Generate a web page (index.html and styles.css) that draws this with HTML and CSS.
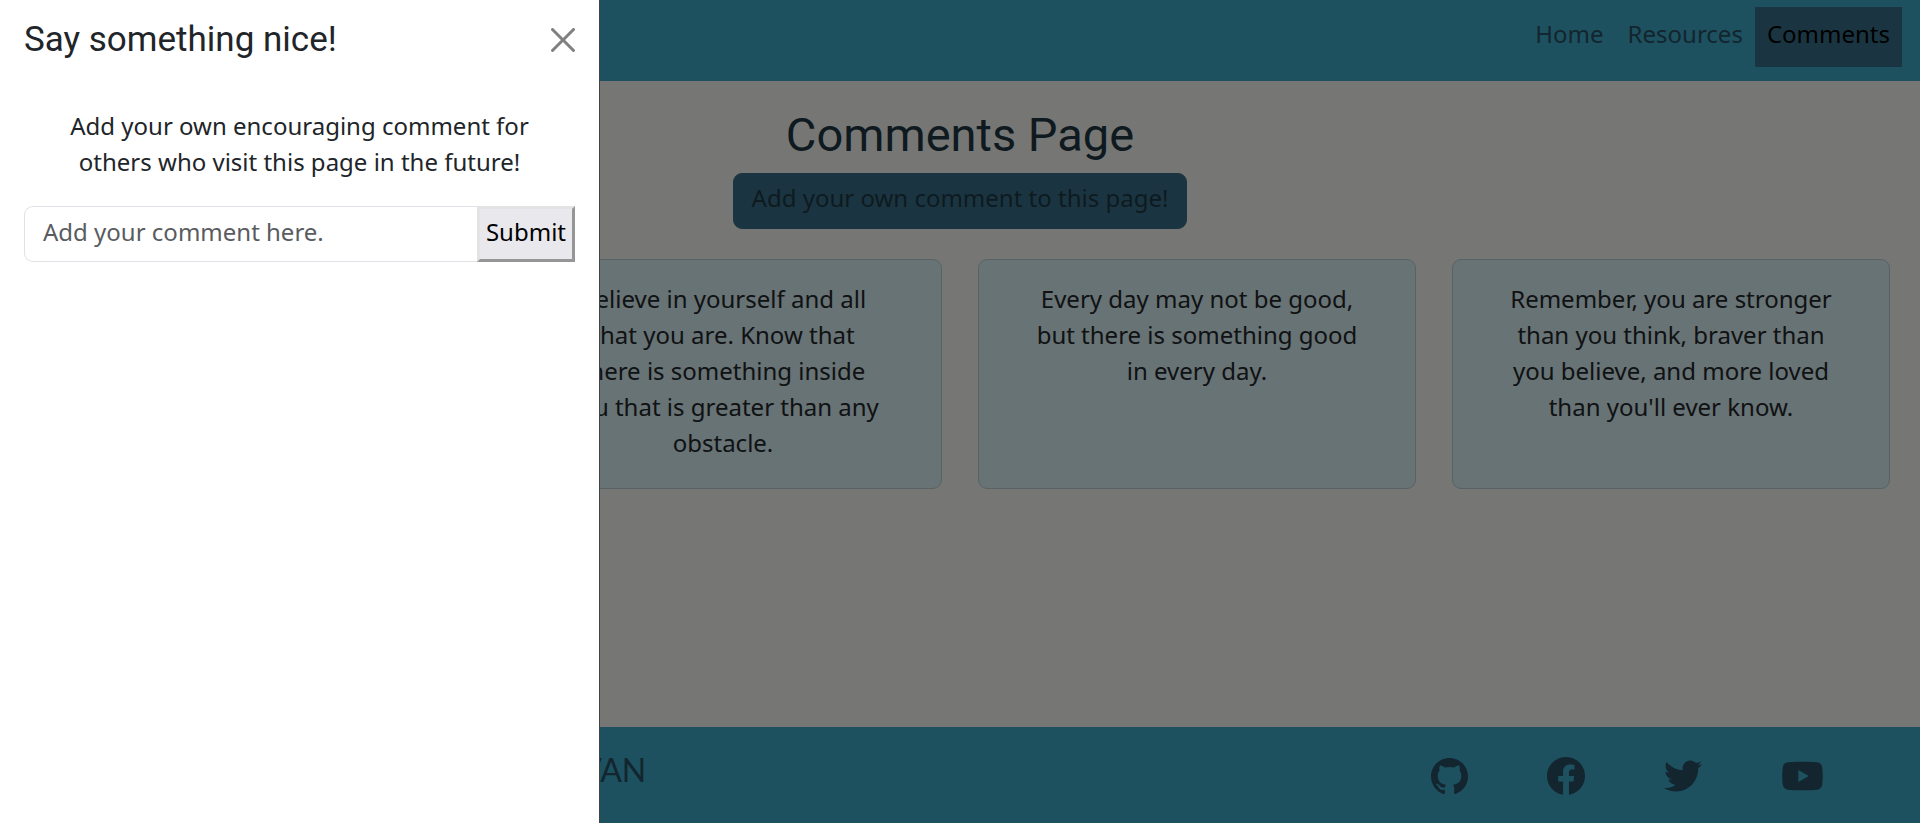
FILE: index.html
```html
<!DOCTYPE html>
<html lang="en">
<head>
<meta charset="utf-8">
<meta name="viewport" content="width=device-width, initial-scale=1">
<title>Comments Page</title>
<link rel="stylesheet" href="styles.css">
</head>
<body>
<div class="page">
  <header class="navbar">
    <nav class="nav">
      <a class="nav-link" href="#">Home</a>
      <a class="nav-link" href="#">Resources</a>
      <a class="nav-link active" href="#" aria-current="page">Comments</a>
    </nav>
  </header>
  <main class="main">
    <h1 class="title">Comments Page</h1>
    <button class="btn-open" type="button">Add your own comment to this page!</button>
    <section class="cards">
      <article class="card"></article>
      <article class="card"><p class="card-text">Believe in yourself and all that you are. Know that there is something inside you that is greater than any obstacle.</p></article>
      <article class="card"><p class="card-text">Every day may not be good, but there is something good in every day.</p></article>
      <article class="card"><p class="card-text">Remember, you are stronger than you think, braver than you believe, and more loved than you'll ever know.</p></article>
    </section>
  </main>
  <footer class="footer">
    <div class="brand">VAN</div>
    <div class="social">
      <a class="social-link" href="#" aria-label="GitHub"><svg width="37" height="37" viewBox="0 0 16 16"><path d="M8 0C3.58 0 0 3.58 0 8c0 3.54 2.29 6.53 5.47 7.59.4.07.55-.17.55-.38 0-.19-.01-.82-.01-1.49-2.01.37-2.53-.49-2.69-.94-.09-.23-.48-.94-.82-1.13-.28-.15-.68-.52-.01-.53.63-.01 1.08.58 1.23.82.72 1.21 1.87.87 2.33.66.07-.52.28-.87.51-1.07-1.78-.2-3.64-.89-3.64-3.95 0-.87.31-1.59.82-2.15-.08-.2-.36-1.02.08-2.12 0 0 .67-.21 2.2.82.64-.18 1.32-.27 2-.27s1.36.09 2 .27c1.53-1.04 2.2-.82 2.2-.82.44 1.1.16 1.92.08 2.12.51.56.82 1.27.82 2.15 0 3.07-1.87 3.75-3.65 3.95.29.25.54.73.54 1.48 0 1.07-.01 1.93-.01 2.2 0 .21.15.46.55.38A8.01 8.01 0 0 0 16 8c0-4.42-3.58-8-8-8z"/></svg></a>
      <a class="social-link" href="#" aria-label="Facebook"><svg width="38" height="38" viewBox="8 8 496 496"><path d="M504 256C504 119 393 8 256 8S8 119 8 256c0 123.780 90.690 226.380 209.250 245V327.690h-63V256h63v-54.640c0-62.150 37-96.480 93.670-96.480 27.140 0 55.520 4.840 55.520 4.840v61h-31.280c-30.800 0-40.410 19.120-40.410 38.730V256h68.780l-11 71.690h-57.780V501C413.310 482.380 504 379.780 504 256z"/></svg></a>
      <a class="social-link" href="#" aria-label="Twitter"><svg width="38" height="38" viewBox="0 0 512 512"><path d="M459.370 151.716c.325 4.548.325 9.097.325 13.645 0 138.720-105.583 298.558-298.558 298.558-59.452 0-114.680-17.219-161.137-47.106 8.447.974 16.568 1.299 25.340 1.299 49.055 0 94.213-16.568 130.274-44.832-46.132-.975-84.792-31.188-98.112-72.772 6.498.974 12.995 1.624 19.818 1.624 9.421 0 18.843-1.300 27.614-3.573-48.081-9.747-84.143-51.980-84.143-102.985v-1.299c13.969 7.797 30.214 12.670 47.431 13.319-28.264-18.843-46.781-51.005-46.781-87.391 0-19.492 5.197-37.360 14.294-52.954 51.655 63.675 129.300 105.258 216.365 109.807-1.624-7.797-2.599-15.918-2.599-24.040 0-57.828 46.782-104.934 104.934-104.934 30.213 0 57.502 12.670 76.670 33.137 23.715-4.548 46.456-13.320 66.599-25.340-7.798 24.366-24.366 44.833-46.132 57.827 21.117-2.273 41.584-8.122 60.426-16.243-14.292 20.791-32.161 39.308-52.628 54.253z"/></svg></a>
      <a class="social-link" href="#" aria-label="YouTube"><svg width="43" height="38" viewBox="0 0 576 512"><path d="M549.655 124.083c-6.281-23.650-24.787-42.276-48.284-48.597C458.781 64 288 64 288 64S117.220 64 74.629 75.486c-23.497 6.322-42.003 24.947-48.284 48.597-11.412 42.867-11.412 132.305-11.412 132.305s0 89.438 11.412 132.305c6.281 23.650 24.787 41.500 48.284 47.821C117.220 448 288 448 288 448s170.780 0 213.371-11.486c23.497-6.321 42.003-24.171 48.284-47.821 11.412-42.867 11.412-132.305 11.412-132.305s0-89.438-11.412-132.305zm-317.510 213.508V175.185l142.739 81.205-142.739 81.201z"/></svg></a>
    </div>
  </footer>
</div>
<div class="backdrop"></div>
<aside class="offcanvas" role="dialog" aria-labelledby="offcanvas-title">
  <div class="offcanvas-header">
    <h2 class="offcanvas-title" id="offcanvas-title">Say something nice!</h2>
    <button class="btn-close" type="button" aria-label="Close"><svg width="24" height="24" viewBox="0 0 16 16"><path d="M.293.293a1 1 0 0 1 1.414 0L8 6.586 14.293.293a1 1 0 1 1 1.414 1.414L9.414 8l6.293 6.293a1 1 0 0 1-1.414 1.414L8 9.414l-6.293 6.293a1 1 0 0 1-1.414-1.414L6.586 8 .293 1.707a1 1 0 0 1 0-1.414z"/></svg></button>
  </div>
  <p class="offcanvas-text">Add your own encouraging comment for others who visit this page in the future!</p>
  <form class="comment-form">
    <input class="comment-input" type="text" placeholder="Add your comment here." aria-label="Add your comment here.">
    <button class="btn-submit" type="submit">Submit</button>
  </form>
</aside>
</body>
</html>
```

FILE: styles.css
```css
* { box-sizing: border-box; }

body {
  margin: 0;
  background: #ecefea;
  color: #212529;
  font: 24px/36px "Noto Sans", sans-serif;
}

h1, h2, p { margin: 0; }
button, input { font: inherit; }

.page {
  display: flex;
  flex-direction: column;
  min-height: 100vh;
}

.navbar {
  display: flex;
  justify-content: flex-end;
  padding: 7px 18px 14px;
  background: #3aa2c0;
}

.nav { display: flex; }

.nav-link {
  padding: 9px 12px 15px;
  color: #264a5c;
  text-decoration: none;
}

.nav-link.active {
  background: #346b82;
  color: #000;
}

.main {
  flex: 1;
  display: flex;
  flex-direction: column;
  align-items: center;
  padding: 26px 30px 30px;
}

.title {
  color: #1c3540;
  font: 400 47px/56px Roboto, sans-serif;
}

.btn-open {
  margin-top: 10px;
  padding: 6px 18px 12px;
  border: 1px solid #346b82;
  border-radius: 9px;
  background: #346b82;
  color: #1c3540;
}

.cards {
  align-self: stretch;
  display: grid;
  grid-template-columns: repeat(4, 1fr);
  gap: 36px;
  margin-top: 30px;
}

.card {
  padding: 21px 54px 27px;
  border: 1px solid #b0c4c8;
  border-radius: 9px;
  background: #d0e6ea;
  text-align: center;
}

.footer {
  display: grid;
  grid-template-columns: 12fr 23fr;
  align-items: center;
  padding: 22px 0;
  background: #3aa2c0;
  color: #264a5c;
}

.brand {
  padding: 0 12px 10px 0;
  font: 400 32px/42px Lato, sans-serif;
  text-align: right;
}

.social {
  display: flex;
  justify-content: flex-end;
  gap: 79px;
  padding: 2px 96px 0 0;
}

.social-link {
  display: flex;
  align-items: center;
  color: inherit;
}

.social-link svg, .btn-close svg {
  display: block;
  fill: currentColor;
}

.backdrop {
  position: fixed;
  inset: 0;
  background: rgba(0, 0, 0, 0.5);
}

.offcanvas {
  position: fixed;
  inset: 0 auto 0 0;
  width: 600px;
  max-width: 100%;
  padding: 0 24px;
  border-right: 1px solid #3f4447;
  background: #fff;
}

.offcanvas-header {
  display: flex;
  align-items: center;
  justify-content: space-between;
  padding: 18px 0;
}

.offcanvas-title {
  font: 400 35px/44px Roboto, sans-serif;
}

.btn-close {
  padding: 0;
  border: 0;
  background: none;
  color: #808080;
}

.offcanvas-text {
  padding: 28px 24px 26px;
  text-align: center;
}

.comment-form { display: flex; }

.comment-input {
  flex: 1;
  min-width: 0;
  padding: 7px 18px 11px;
  border: 1px solid #dee2e6;
  border-right: 0;
  border-radius: 9px 0 0 9px;
  background: #fff;
  color: #212529;
}

.comment-input::placeholder {
  color: #595c5f;
  opacity: 1;
}

.btn-submit {
  padding: 5px 6px 9px;
  border: 3px solid;
  border-color: #e3e3e5 #969696 #969696 #e3e3e5;
  background: #e9e9ed;
  color: #000;
}
```
